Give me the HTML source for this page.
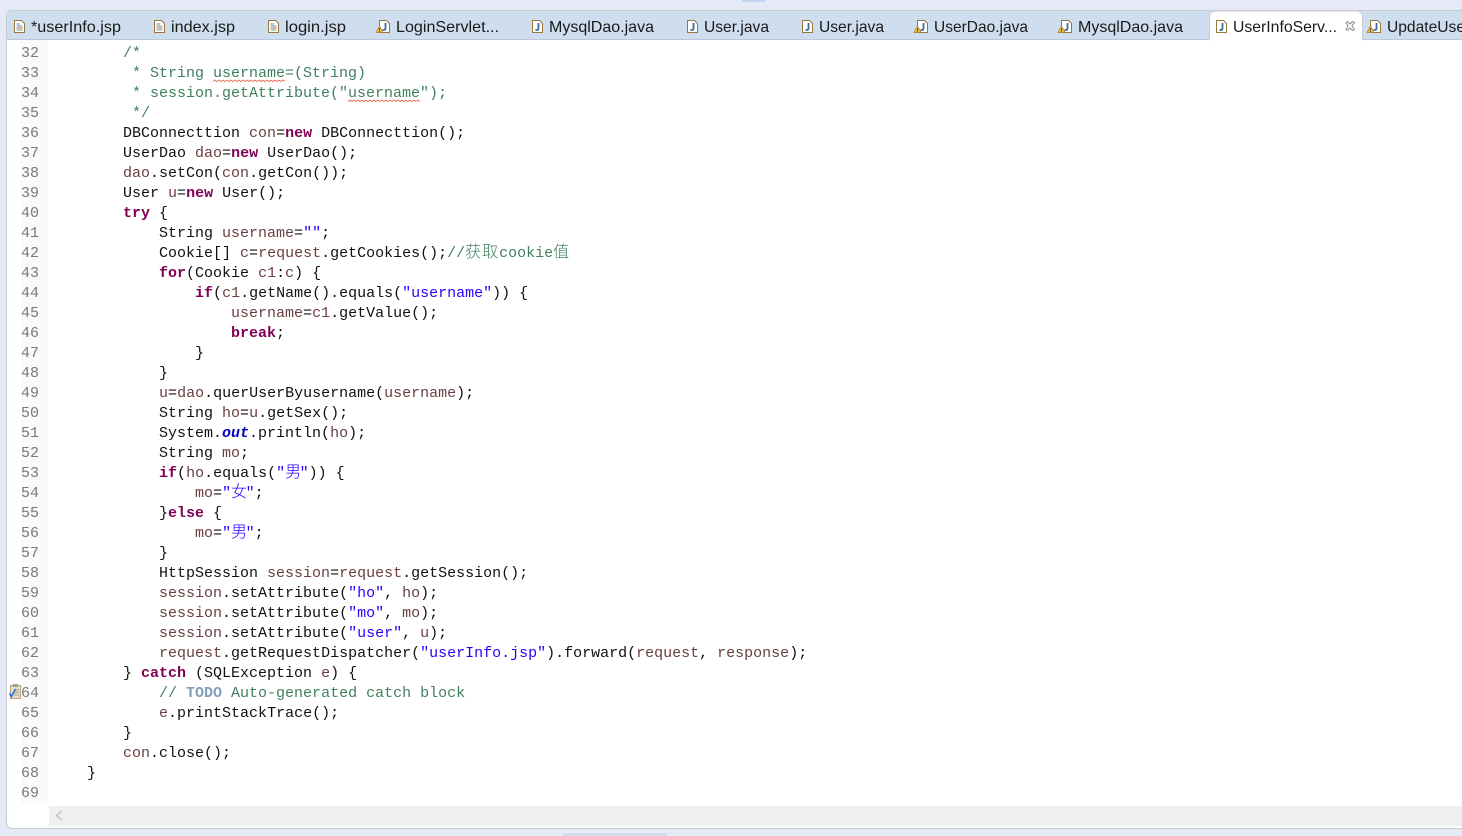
<!DOCTYPE html>
<html lang="en"><head><meta charset="utf-8"><title>Editor</title>
<style>
html,body{margin:0;padding:0;width:1462px;height:836px;overflow:hidden;background:#e6eaf7}
#panel{position:absolute;left:6px;top:10px;width:1470px;height:819px;background:#fff;border:1px solid #c9ccd3;border-radius:6px;box-sizing:border-box;overflow:hidden}
#tabbar{position:absolute;left:7px;top:11px;width:1455px;height:28px;background:#cfdeee;border-top-left-radius:5px}
#tabline{position:absolute;left:7px;top:39px;width:1455px;height:1px;background:#bcc6da}
#gutter{position:absolute;left:21px;top:40px;width:27px;height:764px;background:#fafafa}
#hbar{position:absolute;left:49px;top:806px;width:1413px;height:20px;background:#efefef}
#thumb{position:absolute;left:563px;top:833px;width:104px;height:3px;background:#d3dcec}
#topthumb{position:absolute;left:742px;top:0;width:23px;height:2px;background:#c3d5f0}
#tabs{position:absolute;left:0;top:0}
#nums{position:absolute;left:21px;top:44px;width:18px;font:15px/20px "Liberation Mono",monospace;color:#787878;text-align:right}
#nums div{height:20px}
#code{position:absolute;left:51px;top:44px;font:15px/20px "Liberation Mono","Noto Sans CJK SC",monospace;color:#111;white-space:pre}
#code div{height:20px}
.k{color:#7f0055;font-weight:bold}
.v{color:#6a3e3e}
.s{color:#2a00ff}
.c{color:#3f7f5f}
.t{color:#7f9fbf;font-weight:bold}
.f{color:#0000c0;font-weight:bold;font-style:italic}
.z{font-family:"Noto Sans CJK SC",sans-serif;font-size:16px;font-weight:300;letter-spacing:1px;line-height:0}
.s .z{letter-spacing:-1.5px}
</style></head><body>
<div id="topthumb"></div>
<div id="panel"></div>
<div id="tabbar"></div>
<div id="tabline"></div>
<div id="gutter"></div>
<div id="hbar"></div>
<div id="thumb"></div>

<svg id="tabs" width="1462" height="836" viewBox="0 0 1462 836" xmlns="http://www.w3.org/2000/svg" style="font-family:'Liberation Sans',sans-serif;font-size:16px;fill:#1a1a1a">
<defs>
<g id="jsp"><path d="M.5.5H7.5L10.5 3.5V12.5H.5Z" fill="#fff" stroke="#96783c"/><path d="M2.5 4H6M2.5 6H8.5" stroke="#6a8fb5"/><path d="M2.5 8H8.5" stroke="#b06a50"/><path d="M2.5 10H8.5" stroke="#6fa080"/></g>
<g id="java"><path d="M.5.5H7.5L10.5 3.5V12.5H.5Z" fill="#fff" stroke="#96783c"/><path d="M6.5 3V8.2Q6.5 10 4.8 10H3.4" fill="none" stroke="#3a6ea5" stroke-width="1.8"/></g>
<g id="warn"><path d="M3.5 0L7 6.5H0Z" fill="#f0c24a" stroke="#a87a20" stroke-width=".7"/><path d="M3.5 2V4.4M3.5 5V6" stroke="#5a4010"/></g>
</defs>
<path d="M1209.5 40V17Q1209.5 11 1216 11H1356Q1362.5 11 1362.5 17V40Z" fill="#fff" stroke="#c9ccd3"/>
<rect x="1210" y="38" width="152" height="3" fill="#fff"/>

<use href="#jsp" x="14" y="20"/>
<use href="#jsp" x="154" y="20"/>
<use href="#jsp" x="268" y="20"/>
<use href="#java" x="379" y="20"/><use href="#warn" x="376" y="26"/>
<use href="#java" x="532" y="20"/>
<use href="#java" x="687" y="20"/>
<use href="#java" x="802" y="20"/>
<use href="#java" x="917" y="20"/><use href="#warn" x="914" y="26"/>
<use href="#java" x="1061" y="20"/><use href="#warn" x="1058" y="26"/>
<use href="#java" x="1216" y="20"/>
<use href="#java" x="1370" y="20"/><use href="#warn" x="1367" y="26"/>

<text x="31" y="32" textLength="90" lengthAdjust="spacingAndGlyphs">*userInfo.jsp</text>
<text x="171" y="32" textLength="64" lengthAdjust="spacingAndGlyphs">index.jsp</text>
<text x="285" y="32" textLength="61" lengthAdjust="spacingAndGlyphs">login.jsp</text>
<text x="396" y="32" textLength="103" lengthAdjust="spacingAndGlyphs">LoginServlet...</text>
<text x="549" y="32" textLength="105" lengthAdjust="spacingAndGlyphs">MysqlDao.java</text>
<text x="704" y="32" textLength="65" lengthAdjust="spacingAndGlyphs">User.java</text>
<text x="819" y="32" textLength="65" lengthAdjust="spacingAndGlyphs">User.java</text>
<text x="934" y="32" textLength="94" lengthAdjust="spacingAndGlyphs">UserDao.java</text>
<text x="1078" y="32" textLength="105" lengthAdjust="spacingAndGlyphs">MysqlDao.java</text>
<text x="1233" y="32" textLength="104" lengthAdjust="spacingAndGlyphs">UserInfoServ...</text>
<text x="1387" y="32" textLength="78" lengthAdjust="spacingAndGlyphs">UpdateUse</text>

<path d="M1346 22.5L1347.5 21.5L1350 24L1352.5 21.5L1354.5 22.5L1352 26L1354.5 29.5L1352.5 30.5L1350 28L1347.5 30.5L1346 29.5L1348 26Z" fill="#fff" stroke="#8c8c8c"/>

<path d="M213 81.5l2 -1.5l2 1.5l2 -1.5l2 1.5l2 -1.5l2 1.5l2 -1.5l2 1.5l2 -1.5l2 1.5l2 -1.5l2 1.5l2 -1.5l2 1.5l2 -1.5l2 1.5l2 -1.5l2 1.5l2 -1.5l2 1.5l2 -1.5l2 1.5l2 -1.5l2 1.5l2 -1.5l2 1.5l2 -1.5l2 1.5l2 -1.5l2 1.5l2 -1.5l2 1.5l2 -1.5l2 1.5l2 -1.5l2 1.5" fill="none" stroke="#e8705a" stroke-width=".9"/>
<path d="M348 101.5l2 -1.5l2 1.5l2 -1.5l2 1.5l2 -1.5l2 1.5l2 -1.5l2 1.5l2 -1.5l2 1.5l2 -1.5l2 1.5l2 -1.5l2 1.5l2 -1.5l2 1.5l2 -1.5l2 1.5l2 -1.5l2 1.5l2 -1.5l2 1.5l2 -1.5l2 1.5l2 -1.5l2 1.5l2 -1.5l2 1.5l2 -1.5l2 1.5l2 -1.5l2 1.5l2 -1.5l2 1.5l2 -1.5l2 1.5" fill="none" stroke="#e8705a" stroke-width=".9"/>

<rect x="10.5" y="685.5" width="10" height="13" fill="#e6dcc8" stroke="#b8a27c"/>
<rect x="13" y="684" width="5" height="3" fill="#9aa4b0"/>
<path d="M14 690H19M14 692.5H19M14 695H19" stroke="#8a8a8a" stroke-width=".8"/>
<path d="M9.5 693.5L11.5 696.5L15.5 689" fill="none" stroke="#2f6fd0" stroke-width="1.6"/>

<path d="M61.5 811L56.5 815.5L61.5 820" fill="none" stroke="#c2c2c2" stroke-width="1.5"/>
</svg>

<div id="nums"><div>32</div><div>33</div><div>34</div><div>35</div><div>36</div><div>37</div><div>38</div><div>39</div><div>40</div><div>41</div><div>42</div><div>43</div><div>44</div><div>45</div><div>46</div><div>47</div><div>48</div><div>49</div><div>50</div><div>51</div><div>52</div><div>53</div><div>54</div><div>55</div><div>56</div><div>57</div><div>58</div><div>59</div><div>60</div><div>61</div><div>62</div><div>63</div><div>64</div><div>65</div><div>66</div><div>67</div><div>68</div><div>69</div></div>

<div id="code"><div class="c">        /*</div><div class="c">         * String username=(String)</div><div class="c">         * session.getAttribute("username");</div><div class="c">         */</div><div>        DBConnecttion <span class="v">con</span>=<span class="k">new</span> DBConnecttion();</div><div>        UserDao <span class="v">dao</span>=<span class="k">new</span> UserDao();</div><div>        <span class="v">dao</span>.setCon(<span class="v">con</span>.getCon());</div><div>        User <span class="v">u</span>=<span class="k">new</span> User();</div><div>        <span class="k">try</span> {</div><div>            String <span class="v">username</span>=<span class="s">""</span>;</div><div>            Cookie[] <span class="v">c</span>=<span class="v">request</span>.getCookies();<span class="c">//<span class="z">获取</span>cookie<span class="z">值</span></span></div><div>            <span class="k">for</span>(Cookie <span class="v">c1</span>:<span class="v">c</span>) {</div><div>                <span class="k">if</span>(<span class="v">c1</span>.getName().equals(<span class="s">"username"</span>)) {</div><div>                    <span class="v">username</span>=<span class="v">c1</span>.getValue();</div><div>                    <span class="k">break</span>;</div><div>                }</div><div>            }</div><div>            <span class="v">u</span>=<span class="v">dao</span>.querUserByusername(<span class="v">username</span>);</div><div>            String <span class="v">ho</span>=<span class="v">u</span>.getSex();</div><div>            System.<span class="f">out</span>.println(<span class="v">ho</span>);</div><div>            String <span class="v">mo</span>;</div><div>            <span class="k">if</span>(<span class="v">ho</span>.equals(<span class="s">"<span class="z">男</span>"</span>)) {</div><div>                <span class="v">mo</span>=<span class="s">"<span class="z">女</span>"</span>;</div><div>            }<span class="k">else</span> {</div><div>                <span class="v">mo</span>=<span class="s">"<span class="z">男</span>"</span>;</div><div>            }</div><div>            HttpSession <span class="v">session</span>=<span class="v">request</span>.getSession();</div><div>            <span class="v">session</span>.setAttribute(<span class="s">"ho"</span>, <span class="v">ho</span>);</div><div>            <span class="v">session</span>.setAttribute(<span class="s">"mo"</span>, <span class="v">mo</span>);</div><div>            <span class="v">session</span>.setAttribute(<span class="s">"user"</span>, <span class="v">u</span>);</div><div>            <span class="v">request</span>.getRequestDispatcher(<span class="s">"userInfo.jsp"</span>).forward(<span class="v">request</span>, <span class="v">response</span>);</div><div>        } <span class="k">catch</span> (SQLException <span class="v">e</span>) {</div><div class="c">            // <span class="t">TODO</span> Auto-generated catch block</div><div>            <span class="v">e</span>.printStackTrace();</div><div>        }</div><div>        <span class="v">con</span>.close();</div><div>    }</div><div> </div></div>
</body></html>
